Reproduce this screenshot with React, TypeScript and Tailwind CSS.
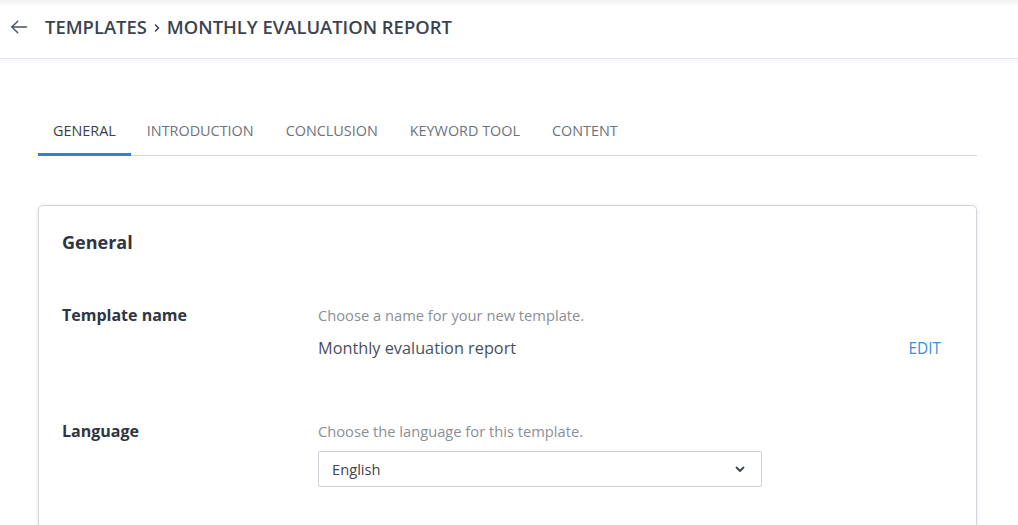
import React from "react";

export default function App() {
  return (
    <div className="min-h-[525px] bg-white" style={{ fontFamily: '"Open Sans", "Liberation Sans", sans-serif' }}>
      <header className="h-[59px] flex items-center pb-[5px] border-b border-[#e3e6ec] bg-[linear-gradient(to_bottom,#f1f2f4,#ffffff_7px)]">
        <div className="w-[45px] flex justify-start pl-[9px]">
          <svg width="20" height="20" viewBox="0 0 24 24" fill="none" stroke="#4a5260" strokeWidth="1.7" strokeLinecap="round" strokeLinejoin="round">
            <path d="M21 12H3.5" />
            <path d="M10.5 5l-7 7 7 7" />
          </svg>
        </div>
        <h1 className="text-[18.4px] font-semibold text-[#3c4350] flex items-center">
          TEMPLATES
          <svg className="mx-[5px] mt-[3px]" width="10" height="10" viewBox="0 0 10 10" fill="none" stroke="#3c4350" strokeWidth="1.6" strokeLinecap="round" strokeLinejoin="round">
            <path d="M3.5 2l3 3-3 3" />
          </svg>
          MONTHLY EVALUATION REPORT
        </h1>
      </header>
      <div className="h-[6px] bg-gradient-to-b from-[#f6f7f9] to-white" />

      <main className="px-[38px] pt-[40px] w-[1015px]">
        <nav className="flex border-b border-[#d4d5db] h-[51px]">
          {["GENERAL", "INTRODUCTION", "CONCLUSION", "KEYWORD TOOL", "CONTENT"].map((t, i) => (
            <div
              key={t}
              className={
                i === 0
                  ? "px-[15px] flex items-center text-[14.4px] text-[#3a404c] border-b-[3px] border-[#3182ce] mb-[-1px] pt-[4px]"
                  : "px-4 flex items-center text-[14.4px] text-[#6e727c] border-b-[3px] border-transparent mb-[-1px] pt-[4px]"
              }
            >
              {t}
            </div>
          ))}
        </nav>

        <section className="mt-[49px] border border-[#d3d5dc] rounded-[5px] shadow-[0_1px_4px_rgba(0,0,0,0.12)] px-[23px] pt-[23px] pb-[40px]">
          <h2 className="text-[18px] font-bold text-[#2f3542] leading-[26px]">General</h2>

          <div className="flex mt-[49px]">
            <div className="w-[256px] text-[16px] font-bold text-[#2f3542] leading-[22px]">Template name</div>
            <div className="flex-1">
              <div className="text-[14.7px] text-[#8b8f97] leading-[22px]">Choose a name for your new template.</div>
              <div className="flex items-center justify-between mt-[10px] pr-[12px]">
                <span className="text-[16.3px] text-[#4a505c] leading-[22px]">Monthly evaluation report</span>
                <span className="text-[15.4px] text-[#3b8fd8] leading-[22px] mt-[2px]">EDIT</span>
              </div>
            </div>
          </div>

          <div className="flex mt-[60px]">
            <div className="w-[256px] text-[16px] font-bold text-[#2f3542] leading-[22px]">Language</div>
            <div className="flex-1">
              <div className="text-[14.7px] text-[#8b8f97] leading-[22px]">Choose the language for this template.</div>
              <div className="mt-[9px] w-[444px] h-[36px] border border-[#cfd1d8] rounded-[2px] flex items-center justify-between pl-[13px] pr-[15px]">
                <span className="text-[14.7px] text-[#3e4450]">English</span>
                <svg width="12" height="12" viewBox="0 0 12 12" fill="none" stroke="#3e4450" strokeWidth="1.8" strokeLinecap="round" strokeLinejoin="round">
                  <path d="M2.5 4.5L6 8l3.5-3.5" />
                </svg>
              </div>
            </div>
          </div>
        </section>
      </main>
    </div>
  );
}
